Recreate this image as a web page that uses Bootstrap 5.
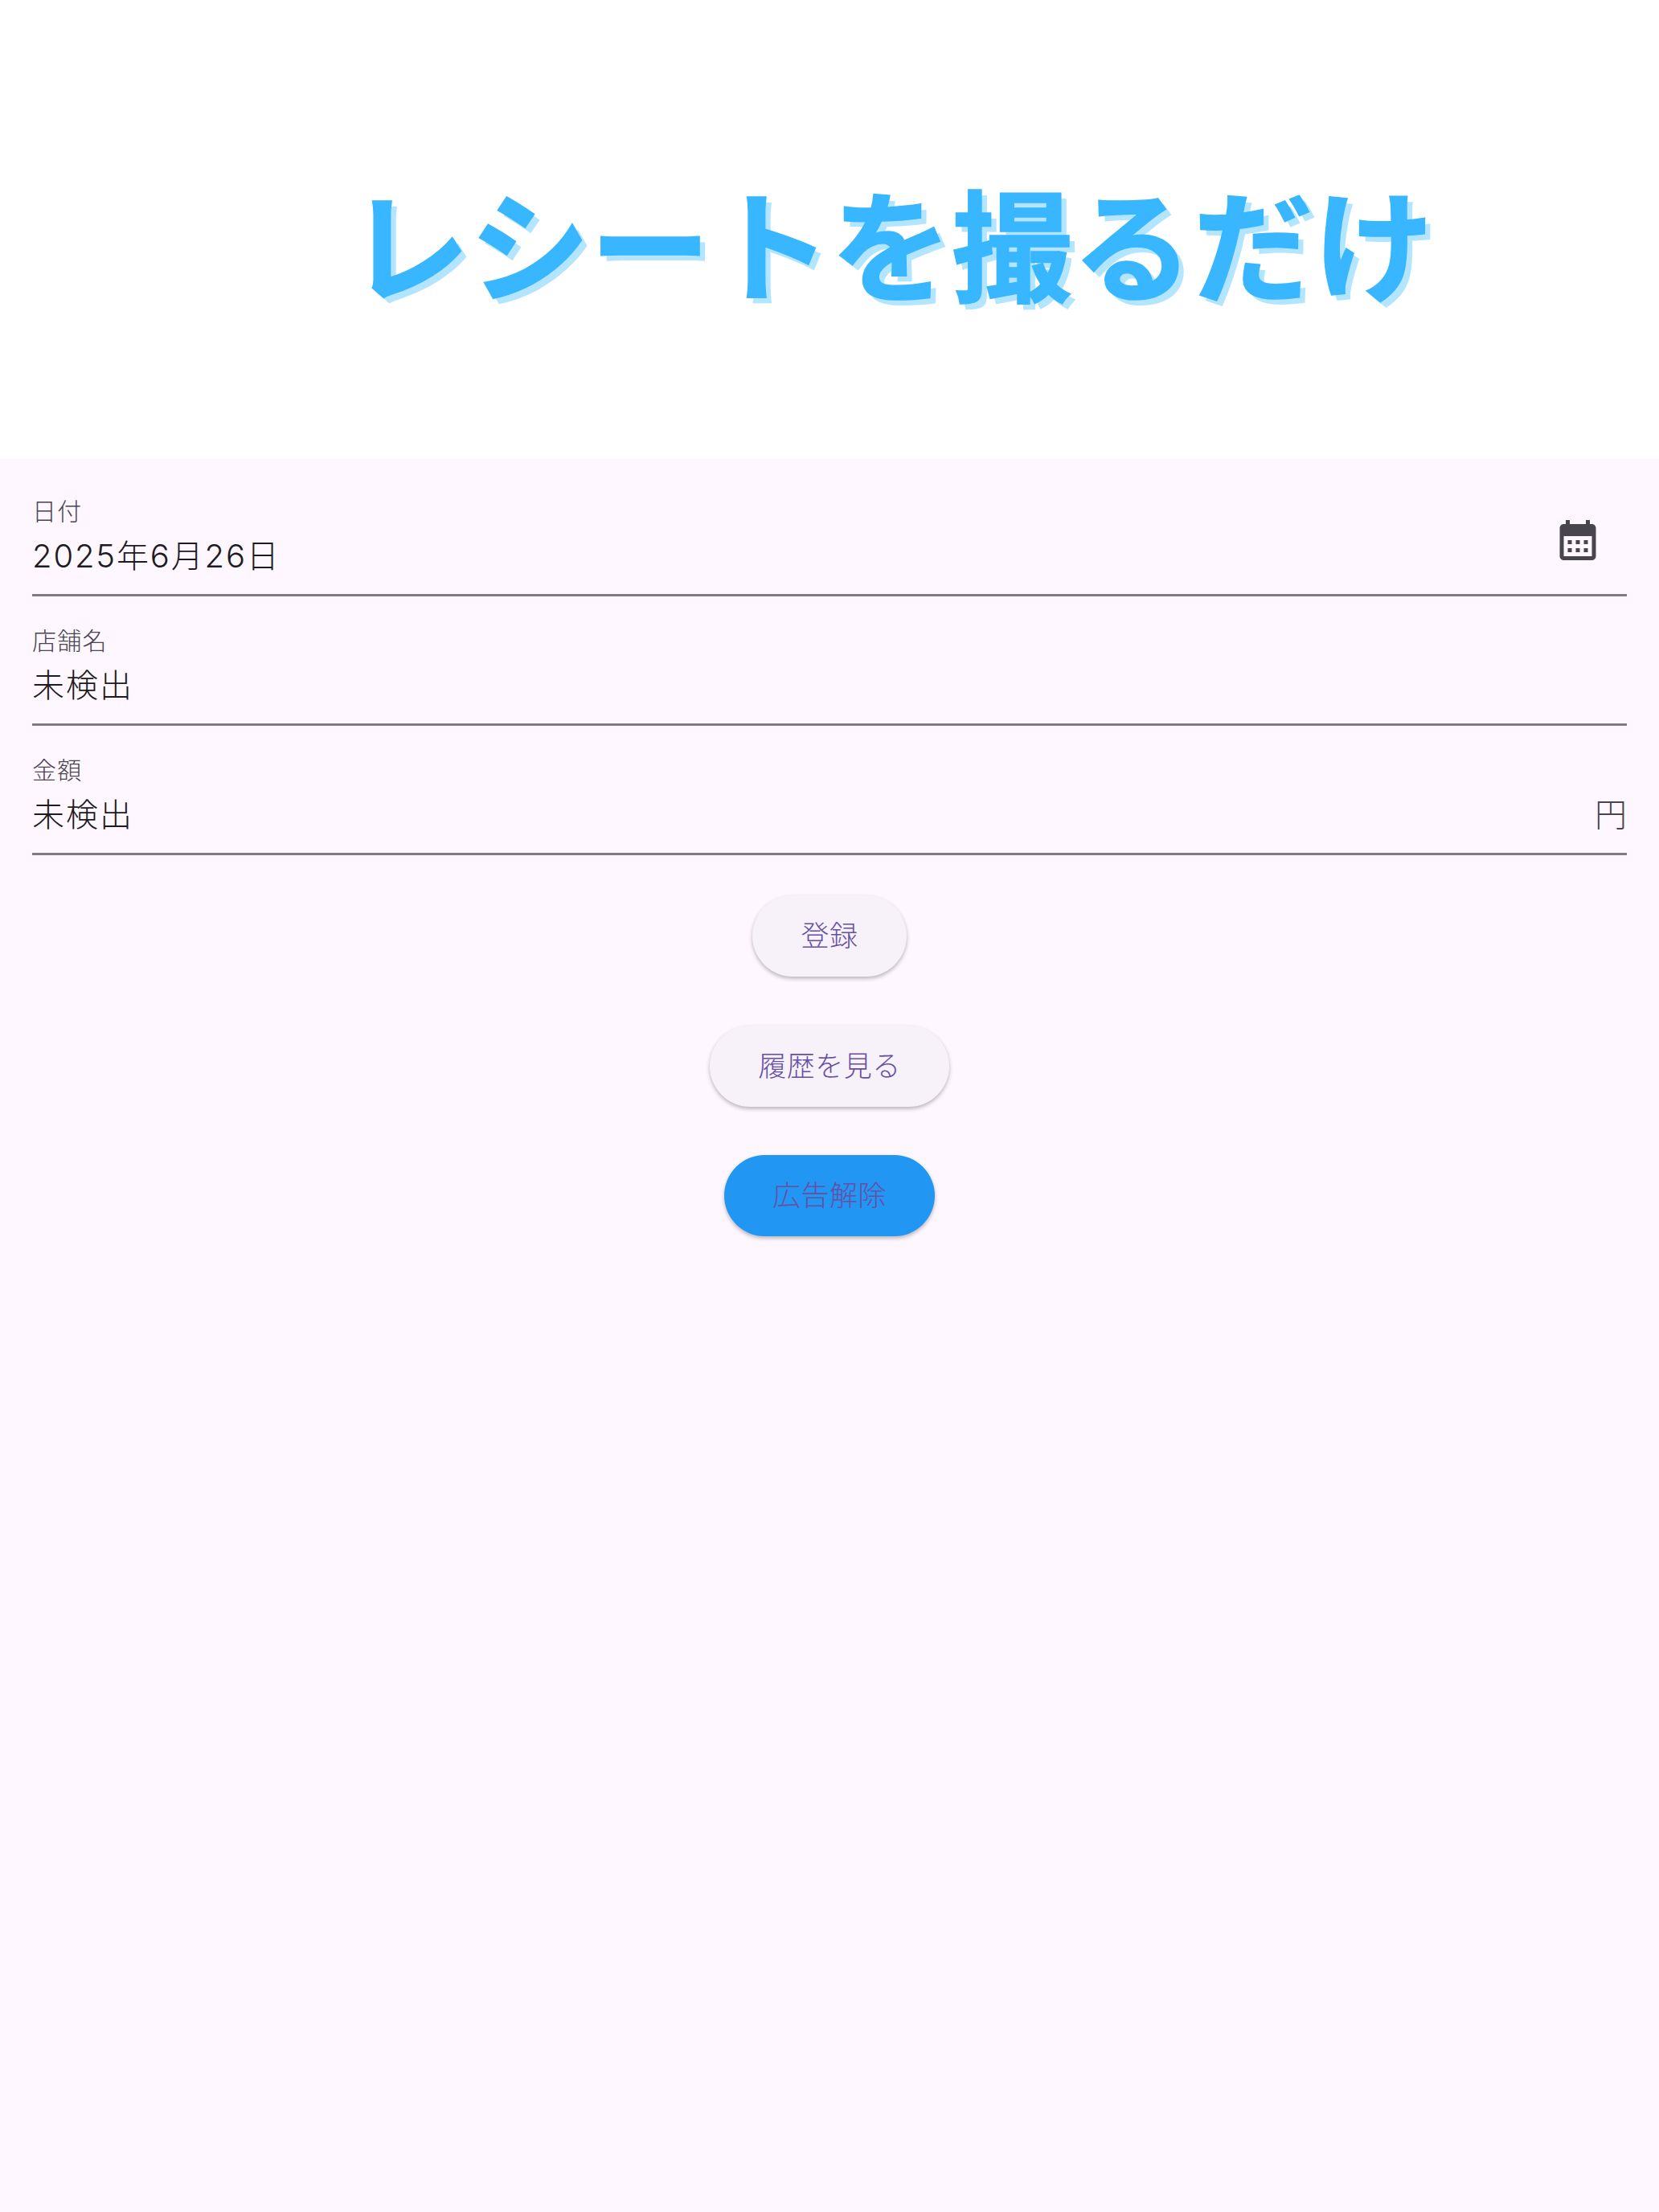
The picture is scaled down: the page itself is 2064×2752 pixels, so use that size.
<!doctype html>
<html lang="ja">
<head>
<meta charset="utf-8">
<title>レシートを撮るだけ</title>
<link rel="stylesheet" href="https://cdn.jsdelivr.net/npm/bootstrap@5.3.0/dist/css/bootstrap.min.css">
<style>
body{background:#FEF7FF;font-family:Inter,"Noto Sans CJK JP",sans-serif;min-height:2752px;color:#1D1B20}
.hero{height:571px;background:#fff;padding-left:154px;padding-top:27px}
.hero-text{font-family:"Noto Sans CJK JP",sans-serif;font-weight:700;font-size:150px;line-height:1;color:#38B6FF;-webkit-text-stroke:1.5px #38B6FF;text-shadow:7px 7px 0 #B3E5FF;white-space:nowrap}
.form-area{padding:10px 40px 0}
.entry{height:161px;border-bottom:3px solid #7F7A85}
.entry-label{font-size:30px;line-height:36px;color:#49454F;padding-top:37px;box-sizing:content-box;letter-spacing:1.3px;font-weight:300}
.entry-value{font-size:40px;line-height:48px;margin-top:14px;letter-spacing:1.85px;font-weight:300}
.value-cjk{letter-spacing:2px}
.entry-suffix{font-size:40px;line-height:48px;color:#49454F;align-self:flex-end;margin-bottom:23px;font-weight:300}
.entry-icon{width:60px;height:60px;fill:#49454F;margin-right:31px;margin-top:61px}
.pill-stack{gap:60.5px;margin-top:50px}
.pill{height:101px;border:0;border-radius:51px;font-size:35px;line-height:1;padding:0 60px;letter-spacing:.5px;color:#6750A4;background:#F7F2FA;box-shadow:0 2.5px 5px rgba(0,0,0,.28);font-weight:300}
.pill-blue{background:#2196F3}
.pill:hover{color:#6750A4;background:#F7F2FA}
.pill-blue:hover{background:#2196F3}
</style>
</head>
<body>
<header class="hero d-flex align-items-center justify-content-center">
  <div class="hero-text">レシートを撮るだけ</div>
</header>
<main class="form-area">
  <div class="entry d-flex justify-content-between">
    <div>
      <div class="entry-label">日付</div>
      <div class="entry-value">2025年6月26日</div>
    </div>
    <svg class="entry-icon" viewBox="0 0 24 24" aria-hidden="true"><path d="M19 4h-1V2h-2v2H8V2H6v2H5c-1.11 0-1.99.9-1.99 2L3 20c0 1.1.89 2 2 2h14c1.1 0 2-.9 2-2V6c0-1.1-.9-2-2-2zm0 16H5V10h14v10zM9 14H7v-2h2v2zm4 0h-2v-2h2v2zm4 0h-2v-2h2v2zm-8 4H7v-2h2v2zm4 0h-2v-2h2v2zm4 0h-2v-2h2v2z"/></svg>
  </div>
  <div class="entry">
    <div class="entry-label">店舗名</div>
    <div class="entry-value value-cjk">未検出</div>
  </div>
  <div class="entry d-flex justify-content-between">
    <div>
      <div class="entry-label">金額</div>
      <div class="entry-value value-cjk">未検出</div>
    </div>
    <div class="entry-suffix">円</div>
  </div>
  <div class="pill-stack d-flex flex-column align-items-center">
    <button type="button" class="btn pill">登録</button>
    <button type="button" class="btn pill">履歴を見る</button>
    <button type="button" class="btn pill pill-blue">広告解除</button>
  </div>
</main>
<script src="https://cdn.jsdelivr.net/npm/bootstrap@5.3.0/dist/js/bootstrap.bundle.min.js"></script>
</body>
</html>
